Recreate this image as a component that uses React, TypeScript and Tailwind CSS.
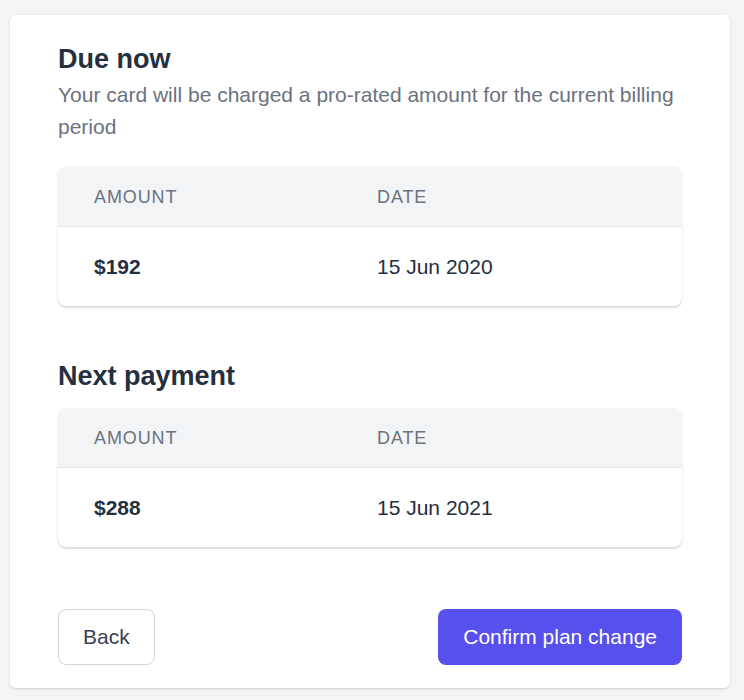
import React from 'react';

type Payment = { amount: string; date: string };

function PaymentTable({ amount, date }: Payment) {
  return <div className="rounded-lg bg-white shadow-[0_1px_3px_rgba(0,0,0,0.1),0_2px_1px_rgba(0,0,0,0.08)] overflow-hidden">
      <div className="grid grid-cols-[283px_1fr] h-[60px] items-center bg-[#f3f4f6] border-b border-[#e5e7eb] text-[18px] tracking-wider text-[#6b7280] uppercase">
        <div className="pl-[36px] pt-[1px]">Amount</div>
        <div className="pl-[36px] pt-[1px]">Date</div>
      </div>
      <div className="grid grid-cols-[283px_1fr] h-[79px] items-center text-[21px] text-[#252f3f]">
        <div className="pl-[36px] pt-[1px] font-bold">{amount}</div>
        <div className="pl-[36px] pt-[1px]">{date}</div>
      </div>
    </div>;
}

export default function App() {
  return <div className="min-h-screen bg-[#f3f4f6] pl-[10px] pr-[14px] pt-[15px] pb-[12px]" style={{ fontFamily: '"Liberation Sans", Arial, sans-serif' }}>
      <div className="bg-white rounded-md shadow-[0_1px_3px_rgba(0,0,0,0.1),0_1px_2px_rgba(0,0,0,0.06)] px-[48px] pt-[28px] pb-[23px]">
        {/* Due now */}
        <h2 className="text-[27px] leading-[32px] font-bold text-[#252f3f]">Due now</h2>
        <p className="mt-[4px] text-[21px] leading-[32px] text-[#6b7280]">
          Your card will be charged a pro-rated amount for the current billing period
        </p>
        <div className="mt-[24px]">
          <PaymentTable amount="$192" date="15 Jun 2020" />
        </div>

        {/* Next payment */}
        <h2 className="mt-[54px] text-[27px] leading-[32px] font-bold text-[#252f3f]">Next payment</h2>
        <div className="mt-[16px]">
          <PaymentTable amount="$288" date="15 Jun 2021" />
        </div>

        <div className="mt-[62px] flex items-center justify-between">
          <button className="h-[56px] px-[24px] rounded-lg border border-[#d2d6dc] bg-white text-[21px] text-[#374151]">
            Back
          </button>
          <button className="h-[56px] px-[25px] rounded-lg bg-[#5850ec] text-[21px] text-white">
            Confirm plan change
          </button>
        </div>
      </div>
    </div>;
}
